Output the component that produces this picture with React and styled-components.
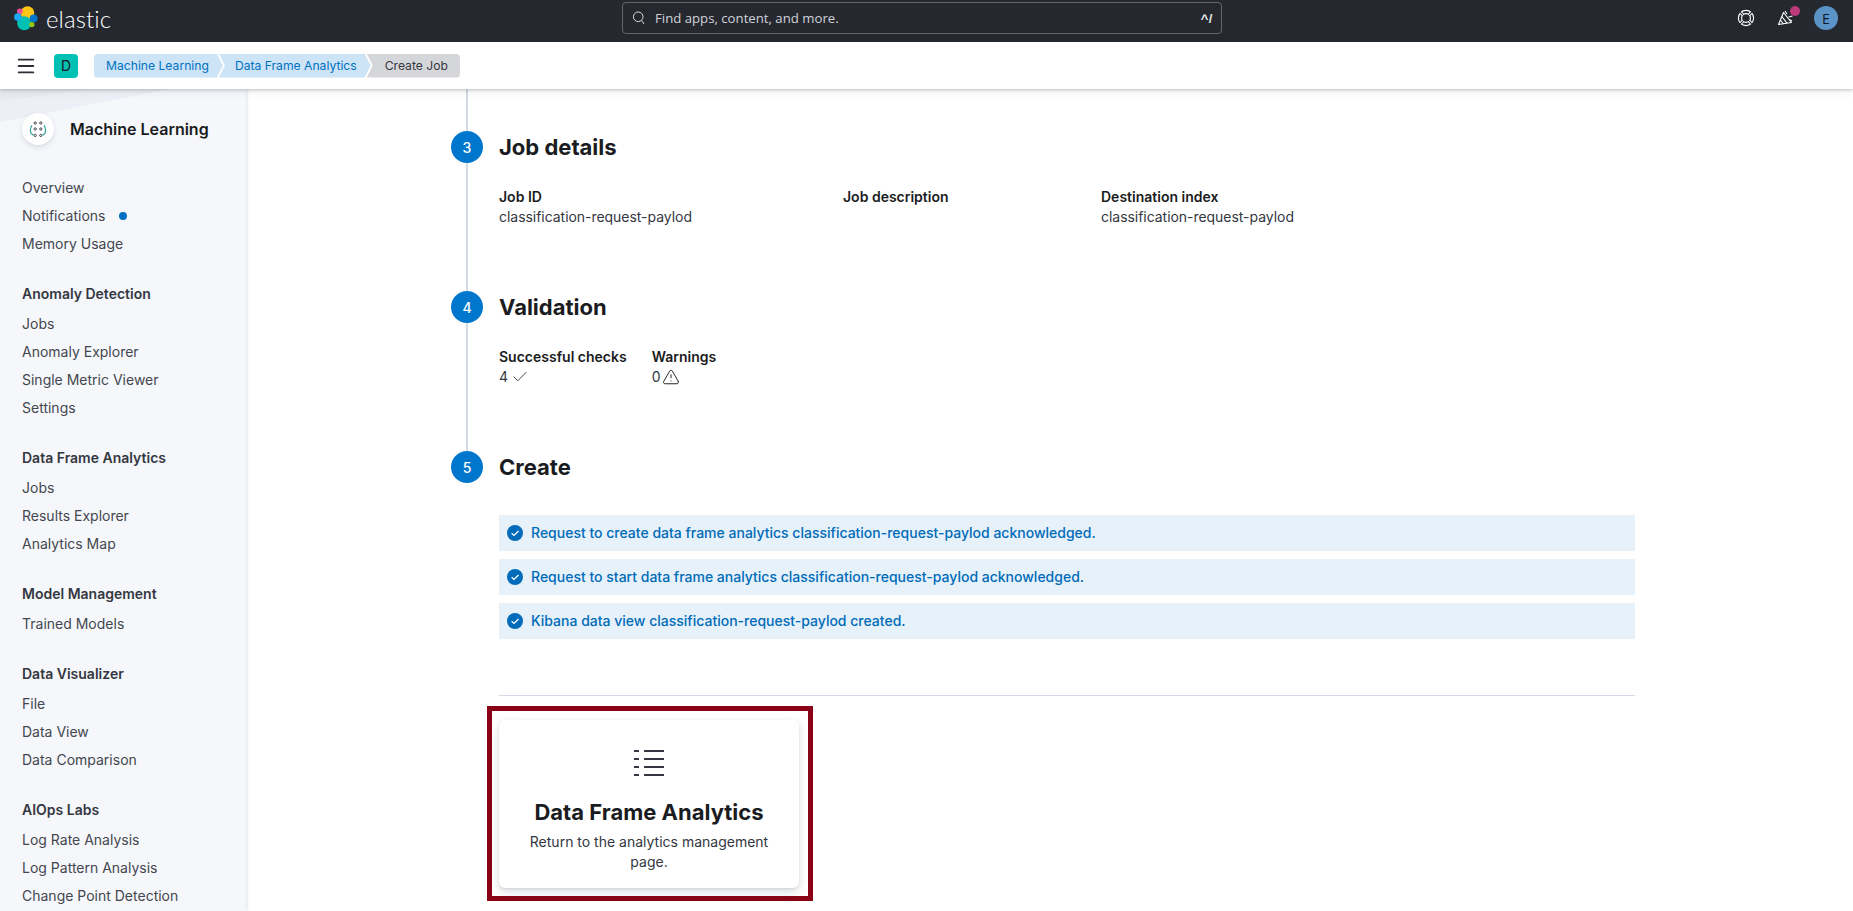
import React from "react";
import styled, { createGlobalStyle } from "styled-components";
import { Check, TriangleAlert, Menu } from "lucide-react";

const Global = createGlobalStyle`
  html, body { margin: 0; padding: 0; height: 100%; overflow: hidden; background: #fff; }
  body { font-family: Inter, "Liberation Sans", sans-serif; font-size: 14px; color: #343741; }
  * { box-sizing: border-box; }
`;

const Page = styled.div`
  display: flex; flex-direction: column; height: 911px; overflow: hidden;
`;
const TopBar = styled.header`
  flex: none; height: 42px; padding-bottom: 6px; background: #25282f; display: grid;
  grid-template-columns: 622px 600px 1fr; align-items: center;
`;
const Brand = styled.div`
  display: flex; align-items: center; gap: 6px; padding-left: 14px;
`;
const BrandName = styled.span`
  font-family: Lato, sans-serif; font-weight: 300; font-size: 24px; letter-spacing: 0.1px; color: #fff; line-height: 30px; position: relative; top: 1px;
`;
const Search = styled.div`
  height: 32px; border: 1px solid #63666c; border-radius: 4px; display: flex; align-items: center;
  padding: 0 8px 0 9px; gap: 9px; color: #d4d7dc;
`;
const SearchText = styled.span`
  flex: 1; font-family: "Open Sans", sans-serif; font-size: 13.2px; color: #cfd2d7;
`;
const Kbd = styled.span`
  font-family: "Liberation Sans", sans-serif; font-weight: 700; font-size: 13px; color: #e6e8eb; letter-spacing: 0.5px;
`;
const TopActions = styled.div`
  display: flex; justify-content: flex-end; align-items: center; padding-right: 15px; color: #fff; gap: 16px;
`;
const ActionIcon = styled.span`
  width: 24px; height: 24px; display: flex; align-items: center; justify-content: center; position: relative;
`;
const NoticeDot = styled.span`
  position: absolute; top: 0; right: -2px; width: 10px; height: 10px; border-radius: 50%; background: #bd3a7a;
`;
const UserAvatar = styled.span`
  width: 24px; height: 24px; border-radius: 50%; background: #5b93c7; color: #0b1a2a; display: flex;
  align-items: center; justify-content: center; font-family: "Open Sans", sans-serif; font-size: 14px;
`;
const SubBar = styled.div`
  flex: none; height: 47px; background: #fff; display: flex; align-items: center; position: relative; z-index: 3;
  box-shadow: 0 1px 3px rgba(60, 70, 90, 0.28), 0 3px 8px rgba(60, 70, 90, 0.08);
`;
const MenuButton = styled.span`
  width: 54px; padding-left: 15px; display: flex; color: #2b2e35;
`;
const SpaceBadge = styled.span`
  width: 24px; height: 24px; border-radius: 4px; background: #00bfb3; color: #1a1c21; display: flex; align-items: center;
  justify-content: center; font-size: 14px; margin-right: 16px;
`;
const Crumbs = styled.nav`
  display: flex; height: 24px;
`;
const Crumb = styled.span`
  display: flex; align-items: center; height: 24px; font-size: 12.15px; margin-right: ${(p) => (p.$last ? 0 : "-4px")};
  padding: 0 ${(p) => (p.$last ? "12px" : "14px")} 0 ${(p) => (p.$first ? "12px" : p.$last ? "18px" : "16px")};
  background: ${(p) => (p.$last ? "#d4d6d9" : "#cce4f5")};
  color: ${(p) => (p.$last ? "#343741" : "#0071c2")};
  border-radius: ${(p) => (p.$first ? "4px 0 0 4px" : p.$last ? "0 4px 4px 0" : "0")};
  clip-path: ${(p) =>
    p.$last
      ? "polygon(0 0, 100% 0, 100% 100%, 0 100%, 6px 50%)"
      : p.$first
      ? "polygon(0 0, calc(100% - 6px) 0, 100% 50%, calc(100% - 6px) 100%, 0 100%)"
      : "polygon(0 0, calc(100% - 6px) 0, 100% 50%, calc(100% - 6px) 100%, 0 100%, 6px 50%)"};
`;
const Body = styled.div`
  flex: 1; min-height: 0; display: flex;
`;
const Sidebar = styled.aside`
  flex: none; width: 246px; background: #f5f7fb; position: relative; overflow: hidden; padding: 23px 16px 0 22px; z-index: 2;
  box-shadow: 1px 0 3px rgba(60, 70, 90, 0.18);
`;
const SideDecor = styled.svg`
  position: absolute; left: 0; top: 0;
`;
const SideHead = styled.div`
  display: flex; align-items: center; gap: 16px; height: 34px; margin-bottom: 28px; position: relative;
`;
const SideLogo = styled.span`
  width: 32px; height: 32px; border-radius: 50%; background: #fff; display: flex; align-items: center; justify-content: center;
  box-shadow: 0 2px 5px rgba(60, 70, 90, 0.16);
`;
const SideTitle = styled.span`
  font-size: 16px; font-weight: 600; color: #1a1c21;
`;
const Section = styled.div`
  margin-bottom: 26px; position: relative;
`;
const SectionHead = styled.div`
  height: 20px; line-height: 20px; font-size: 14px; font-weight: 600; color: #343741; margin-bottom: 6px;
`;
const NavItem = styled.div`
  height: 28px; line-height: 28px; font-size: 14px; color: #44474f; display: flex; align-items: center; gap: 13px;
`;
const BlueDot = styled.span`
  width: 8px; height: 8px; border-radius: 50%; background: #0071c2;
`;
const Main = styled.main`
  flex: 1; padding-left: 205px; overflow: hidden; min-width: 0;
`;
const Content = styled.div`
  width: 1184px;
`;
const Step = styled.section`
  display: grid; grid-template-columns: 32px 1fr; column-gap: 16px;
`;
const Rail = styled.div`
  display: flex; flex-direction: column; align-items: center;
`;
const RailLine = styled.span`
  width: 2px; background: #d3dae6; flex: ${(p) => (p.$h ? `none` : 1)}; height: ${(p) => (p.$h ? `${p.$h}px` : "auto")};
`;
const StepBadge = styled.span`
  flex: none; width: 32px; height: 32px; border-radius: 50%; background: #0077cc; color: #fff; font-weight: 500; font-size: 14px;
  display: flex; align-items: center; justify-content: center;
`;
const StepBody = styled.div`
  padding-top: ${(p) => p.$top || 0}px; padding-bottom: ${(p) => p.$bottom ?? 64}px;
`;
const StepTitle = styled.h2`
  margin: 0; font-size: 22px; line-height: 32px; font-weight: 700; color: #1a1c21;
`;
const Facts = styled.div`
  display: flex; margin-top: 24px;
`;
const Fact = styled.div`
  width: ${(p) => (p.$w ? `${p.$w}px` : "auto")}; margin-right: ${(p) => p.$gap || 0}px;
`;
const Label = styled.div`
  font-size: 14px; line-height: 20px; font-weight: 600; color: #1a1c21;
`;
const Value = styled.div`
  font-size: 14px; line-height: 20px; letter-spacing: -0.04px; color: #343741; display: flex; align-items: center; gap: ${(p) => p.$gap || 0}px;
`;
const Callouts = styled.div`
  display: flex; flex-direction: column; gap: 8px; margin-top: 32px;
`;
const Callout = styled.div`
  height: 36px; background: #e6f1fa; color: #006bb8; font-size: 14px; font-weight: 500; display: flex; align-items: center; gap: 8px; padding: 0 0 1px 8px;
`;
const Divider = styled.hr`
  margin: 56px 0 10px; border: 0; height: 1px; background: #d3dae6;
`;
const Frame = styled.div`
  width: 326px; height: 195px; margin-left: -12px; border: 5px solid #8a0016; padding: 9px 7px 0;
`;
const Card = styled.div`
  width: 300px; height: 168px; border-radius: 6px; background: #fff; padding-top: 29px; display: flex; flex-direction: column; align-items: center; text-align: center;
  box-shadow: 0 1px 2px rgba(60, 70, 90, 0.1), 0 3px 7px rgba(60, 70, 90, 0.12), 0 6px 14px rgba(60, 70, 90, 0.07);
`;
const CardTitle = styled.div`
  font-size: 22px; line-height: 32px; font-weight: 700; color: #1a1c21; margin-top: 19px;
`;
const CardText = styled.div`
  font-size: 14px; line-height: 20px; color: #343741; padding: 0 24px; margin-top: 4px;
`;

const ElasticLogo = () => (
  <svg width="26" height="26" viewBox="0 0 26 26">
    <circle cx="13.5" cy="8" r="6.8" fill="#fec514" />
    <circle cx="10.2" cy="18.3" r="7" fill="#00bfb3" />
    <circle cx="5.8" cy="6.3" r="2.8" fill="#f04e98" />
    <circle cx="3.8" cy="12" r="3.7" fill="#1ba9f5" />
    <circle cx="19.6" cy="13.5" r="3.9" fill="#0077cc" />
    <circle cx="17.8" cy="19.6" r="2.7" fill="#93c90e" />
  </svg>
);

const LifeIcon = () => (
  <svg width="18" height="18" viewBox="0 0 18 18" fill="none" stroke="#fff" strokeWidth="1.15">
    <circle cx="9" cy="9" r="7.6" />
    <circle cx="9" cy="9" r="4.4" />
    <path d="M5.9 5.9 3.6 3.6M12.1 5.9l2.3-2.3M5.9 12.1l-2.3 2.3M12.1 12.1l2.3 2.3" strokeWidth="3" />
    <path d="M5.9 5.9 3.2 3.2M12.1 5.9l2.7-2.7M5.9 12.1l-2.7 2.7M12.1 12.1l2.7 2.7" stroke="#25282f" strokeWidth="1.2" />
  </svg>
);

const CheerIcon = () => (
  <svg width="18" height="18" viewBox="0 0 18 18" fill="none" stroke="#fff" strokeWidth="1.1" strokeLinejoin="round">
    <path d="M6.5 3.5 1.5 15.5 14.5 13.5 Z" />
    <path d="M4.8 7.5 10 14.2M3.4 11 6.5 15" />
    <path d="M8 2 10 5M11.5 8l4-1M12 10.5l3 1.5" />
  </svg>
);

const MlIcon = () => (
  <svg width="18" height="18" viewBox="0 0 18 18" fill="none">
    {[3, 9, 15.4].map((y) =>
      [6.2, 11.8].map((x) => <circle key={`${x}-${y}`} cx={x} cy={y} r="1.15" stroke="#343741" strokeWidth="0.9" />)
    )}
    <path d="M3 5.4C1.4 7.6 1.2 11 2 13.2L4.4 15.2M15 5.4c1.6 2.2 1.8 5.6 1 7.8l-2.4 2" stroke="#2aa198" strokeWidth="1.2" />
  </svg>
);

const ListIcon = () => (
  <svg width="32" height="28" viewBox="0 0 32 28" fill="#343741">
    {[1, 9, 17, 25].map((y) => (
      <React.Fragment key={y}>
        <rect x="1" y={y} width="5" height="2" />
        <rect x="11" y={y} width="20" height="2" />
      </React.Fragment>
    ))}
  </svg>
);

const SearchIcon = () => (
  <svg width="14" height="14" viewBox="0 0 14 14" fill="none" stroke="#d4d7dc" strokeWidth="1">
    <circle cx="6.2" cy="5.8" r="4.8" />
    <path d="M9.6 9.4 12 13" />
  </svg>
);

const DoneIcon = () => (
  <svg width="16" height="16" viewBox="0 0 16 16">
    <circle cx="8" cy="8" r="8" fill="#006bb8" />
    <path d="M4.6 8.3 7 10.4 11.5 6" fill="none" stroke="#fff" strokeWidth="1.3" />
  </svg>
);

const nav = [
  { items: ["Overview", "Notifications", "Memory Usage"] },
  { head: "Anomaly Detection", items: ["Jobs", "Anomaly Explorer", "Single Metric Viewer", "Settings"] },
  { head: "Data Frame Analytics", items: ["Jobs", "Results Explorer", "Analytics Map"] },
  { head: "Model Management", items: ["Trained Models"] },
  { head: "Data Visualizer", items: ["File", "Data View", "Data Comparison"] },
  { head: "AIOps Labs", items: ["Log Rate Analysis", "Log Pattern Analysis", "Change Point Detection"] },
];

const messages = [
  "Request to create data frame analytics classification-request-paylod acknowledged.",
  "Request to start data frame analytics classification-request-paylod acknowledged.",
  "Kibana data view classification-request-paylod created.",
];

export default function App() {
  return (
    <Page>
      <Global />
      <TopBar>
        <Brand>
          <ElasticLogo />
          <BrandName>elastic</BrandName>
        </Brand>
        <Search>
          <SearchIcon />
          <SearchText>Find apps, content, and more.</SearchText>
          <Kbd>^/</Kbd>
        </Search>
        <TopActions>
          <ActionIcon><LifeIcon /></ActionIcon>
          <ActionIcon><CheerIcon /><NoticeDot /></ActionIcon>
          <UserAvatar>E</UserAvatar>
        </TopActions>
      </TopBar>
      <SubBar>
        <MenuButton><Menu size={22} strokeWidth={2} /></MenuButton>
        <SpaceBadge>D</SpaceBadge>
        <Crumbs>
          <Crumb $first>Machine Learning</Crumb>
          <Crumb>Data Frame Analytics</Crumb>
          <Crumb $last>Create Job</Crumb>
        </Crumbs>
      </SubBar>
      <Body>
        <Sidebar>
          <SideDecor width="246" height="50" viewBox="0 0 246 50">
            <path d="M0 0H170L0 33Z" fill="#eceff5" />
            <path d="M0 0H90L0 12Z" fill="#e7eaf0" />
          </SideDecor>
          <SideHead>
            <SideLogo><MlIcon /></SideLogo>
            <SideTitle>Machine Learning</SideTitle>
          </SideHead>
          {nav.map((s, i) => (
            <Section key={i}>
              {s.head && <SectionHead>{s.head}</SectionHead>}
              {s.items.map((it) => (
                <NavItem key={it}>
                  {it}
                  {it === "Notifications" && <BlueDot />}
                </NavItem>
              ))}
            </Section>
          ))}
        </Sidebar>
        <Main>
          <Content>
            <Step>
              <Rail>
                <RailLine $h={42} />
                <StepBadge>3</StepBadge>
                <RailLine />
              </Rail>
              <StepBody $top={42}>
                <StepTitle>Job details</StepTitle>
                <Facts>
                  <Fact $w={344}>
                    <Label>Job ID</Label>
                    <Value>classification-request-paylod</Value>
                  </Fact>
                  <Fact $w={258}>
                    <Label>Job description</Label>
                  </Fact>
                  <Fact>
                    <Label>Destination index</Label>
                    <Value>classification-request-paylod</Value>
                  </Fact>
                </Facts>
              </StepBody>
            </Step>
            <Step>
              <Rail>
                <StepBadge>4</StepBadge>
                <RailLine />
              </Rail>
              <StepBody>
                <StepTitle>Validation</StepTitle>
                <Facts>
                  <Fact $gap={25}>
                    <Label>Successful checks</Label>
                    <Value $gap={3}>4 <Check size={18} strokeWidth={1.1} color="#1a1c21" /></Value>
                  </Fact>
                  <Fact>
                    <Label>Warnings</Label>
                    <Value $gap={2}>0 <TriangleAlert size={18} strokeWidth={1.25} color="#1a1c21" /></Value>
                  </Fact>
                </Facts>
              </StepBody>
            </Step>
            <Step>
              <Rail>
                <StepBadge>5</StepBadge>
              </Rail>
              <StepBody $bottom={0}>
                <StepTitle>Create</StepTitle>
                <Callouts>
                  {messages.map((m) => (
                    <Callout key={m}>
                      <DoneIcon />
                      {m}
                    </Callout>
                  ))}
                </Callouts>
                <Divider />
                <Frame>
                  <Card>
                    <ListIcon />
                    <CardTitle>Data Frame Analytics</CardTitle>
                    <CardText>Return to the analytics management page.</CardText>
                  </Card>
                </Frame>
              </StepBody>
            </Step>
          </Content>
        </Main>
      </Body>
    </Page>
  );
}
